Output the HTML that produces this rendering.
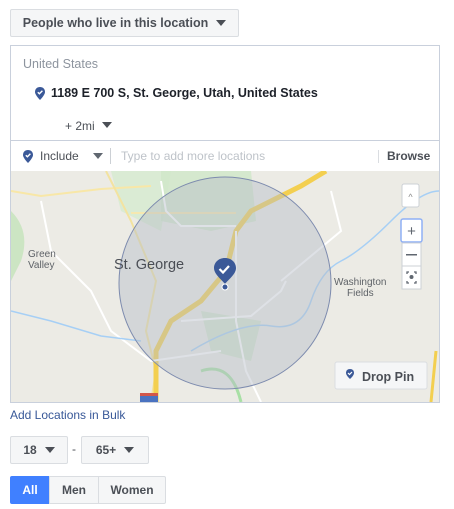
<!DOCTYPE html>
<html><head><meta charset="utf-8"><style>
*{box-sizing:border-box;margin:0;padding:0}
body{width:454px;height:509px;background:#fff;font-family:"Liberation Sans",Helvetica,Arial,sans-serif;position:relative;overflow:hidden;color:#1d2129}
.abs{position:absolute}
.btn{position:absolute;background:#f5f6f7;border:1px solid #dadde1;border-radius:2px;font-weight:bold;font-size:12px;color:#4b4f56;display:flex;align-items:center;justify-content:center}
.tri{display:inline-block;width:0;height:0;border-left:5px solid transparent;border-right:5px solid transparent;border-top:6px solid #4b4f56;margin-left:8px}
</style></head><body>
<div class="btn" style="left:10px;top:9px;width:229px;height:28px;font-size:12.5px">People who live in this location<span class="tri"></span></div>

<div class="abs" style="left:10px;top:45px;width:430px;height:358px;border:1px solid #c9d0dc;"></div>
<div class="abs" style="left:23px;top:57px;font-size:12.5px;color:#8d949e">United States</div>
<svg class="abs" style="left:35px;top:87px" width="10" height="13" viewBox="0 0 10 13"><path d="M5 0C2 0 0 2 0 5c0 3 5 8 5 8s5-5 5-8C10 2 8 0 5 0z" fill="#3b5998"/><path d="M2.8 5.2l1.6 1.6 3-3" stroke="#fff" stroke-width="1.4" fill="none"/></svg>
<div class="abs" style="left:51px;top:86px;font-size:12.5px;font-weight:bold;color:#1d2129">1189 E 700 S, St. George, Utah, United States</div>
<div class="abs" style="left:65px;top:119px;font-size:12px;color:#4b4f56">+ 2mi<span class="tri" style="margin-left:7px;vertical-align:2px"></span></div>
<div class="abs" style="left:11px;top:140px;width:428px;height:1px;background:#c9d0dc"></div>
<svg class="abs" style="left:23px;top:150px" width="10" height="13" viewBox="0 0 10 13"><path d="M5 0C2 0 0 2 0 5c0 3 5 8 5 8s5-5 5-8C10 2 8 0 5 0z" fill="#3b5998"/><path d="M2.8 5.2l1.6 1.6 3-3" stroke="#fff" stroke-width="1.4" fill="none"/></svg>
<div class="abs" style="left:40px;top:149px;font-size:12px;color:#4b4f56">Include</div>
<span class="abs tri" style="left:85px;top:153px;border-top-color:#606770"></span>
<div class="abs" style="left:110px;top:148px;width:1px;height:16px;background:#ccd0d5"></div>
<div class="abs" style="left:121px;top:149px;font-size:12px;color:#bec3c9">Type to add more locations</div>
<div class="abs" style="left:378px;top:150px;width:1px;height:13px;background:#dadde1"></div>
<div class="abs" style="left:387px;top:149px;font-size:12px;font-weight:bold;color:#4b4f56">Browse</div>

<svg class="abs" style="left:11px;top:171px" width="428" height="231" viewBox="0 0 428 231">
<rect width="428" height="231" fill="#ecebe5"/>
<path d="M100 0 L160 0 L150 60 L110 40 Z" fill="#d6ebcf" opacity=".8"/>
<path d="M150 0 L240 0 L245 50 L200 60 L150 50Z" fill="#cfe7c8" opacity=".8"/>
<path d="M0 40 Q20 60 10 90 L0 110Z" fill="#bfe3b5" opacity=".7"/>
<path d="M190 140 L250 150 L240 190 L200 180Z" fill="#c6e3c0" opacity=".6"/>
<path d="M0 20 L30 25 L90 18 L140 15" stroke="#f8e7a7" stroke-width="2" fill="none"/>
<path d="M95 0 L120 50 L145 110 L135 160 L145 200 L140 231" stroke="#f3e3a0" stroke-width="2" fill="none"/>
<path d="M315 0 L290 15 L240 40 L225 60 L215 100 L190 130 L160 150 L145 180 L145 231" stroke="#f3cf50" stroke-width="5" fill="none"/>
<path d="M120 42 L225 42" stroke="#f6e8b0" stroke-width="2" fill="none"/>
<path d="M225 60 L225 150 L235 200 L250 231" stroke="#fff" stroke-width="2" fill="none"/>
<path d="M150 10 L155 40 L170 55 L225 55" stroke="#fff" stroke-width="2" fill="none"/>
<path d="M30 30 L40 80 L80 120 L100 160 L140 190 L210 180" stroke="#fff" stroke-width="2" fill="none"/>
<path d="M270 110 L330 60 L320 20" stroke="#fff" stroke-width="2" fill="none"/>
<path d="M170 150 L240 145 L270 120 L275 110" stroke="#fff" stroke-width="2" fill="none"/>
<path d="M180 180 Q230 150 260 155 T300 130 T330 90 T380 50 T428 20" stroke="#a6cff5" stroke-width="1.5" fill="none"/>
<path d="M0 140 L40 150 L90 165 L130 170" stroke="#a6cff5" stroke-width="1.5" fill="none"/>
<path d="M190 200 Q220 190 230 231" stroke="#a8e0a5" stroke-width="3" fill="none"/>
<path d="M265 231 Q280 200 275 190" stroke="#f3cf50" stroke-width="0" fill="none"/>
<path d="M425 180 L420 231" stroke="#f3cf50" stroke-width="3" fill="none"/>
<circle cx="214" cy="112" r="106" fill="#b6bcc8" fill-opacity=".45" stroke="#7d8bae" stroke-width="1"/>
<rect x="129" y="222" width="18" height="9" fill="#4a72c0"/><rect x="129" y="222" width="18" height="3" fill="#d2564a"/>
<text x="17" y="86" font-size="10" fill="#5f6368" font-family="Liberation Sans,sans-serif">Green</text>
<text x="17" y="97" font-size="10" fill="#5f6368" font-family="Liberation Sans,sans-serif">Valley</text>
<text x="103" y="98" font-size="14.5" fill="#4a4e55" font-family="Liberation Sans,sans-serif">St. George</text>
<text x="323" y="114" font-size="10" fill="#5f6368" font-family="Liberation Sans,sans-serif">Washington</text>
<text x="336" y="125" font-size="10" fill="#5f6368" font-family="Liberation Sans,sans-serif">Fields</text>
<path d="M214 87 C207 87 203 92 203 97 C203 103 210 108 214 113 C218 108 225 103 225 97 C225 92 221 87 214 87Z" fill="#3b5998"/>
<path d="M208.5 98l3.5 3.5 6-6.5" stroke="#fff" stroke-width="2.2" fill="none"/>
<circle cx="214" cy="116" r="3" fill="#3b5998" stroke="#fff" stroke-width="1"/>
<rect x="391" y="13" width="17" height="23" rx="2" fill="#fff" stroke="#ccd0d5"/>
<text x="399.5" y="29" font-size="9" fill="#888" text-anchor="middle">^</text>
<rect x="390" y="48" width="21" height="23" rx="2" fill="#fff" stroke="#8fb0f5" stroke-width="1.5"/>
<text x="400.5" y="65" font-size="15" fill="#606770" text-anchor="middle">+</text>
<rect x="391" y="72" width="19" height="23" fill="#fff" stroke="#ccd0d5"/>
<rect x="395" y="83" width="11" height="1.5" fill="#606770"/>
<rect x="391" y="95" width="19" height="23" fill="#fff" stroke="#ccd0d5"/>
<path d="M396 103v-2h2 M403 101h2v2 M405 110v2h-2 M398 112h-2v-2" stroke="#606770" stroke-width="1.3" fill="none"/><circle cx="400.5" cy="106" r="2" fill="#606770"/>
<rect x="324" y="191" width="92" height="27" rx="2" fill="#f5f6f7" stroke="#dadde1"/>
<path d="M339 198C336.5 198 335 199.5 335 202c0 2.5 4 6 4 6s4-3.5 4-6c0-2.5-1.5-4-4-4z" fill="#3b5998"/>
<path d="M337 202l1.5 1.5 2.5-2.5" stroke="#fff" stroke-width="1.2" fill="none"/>
<text x="351" y="210" font-size="12.5" font-weight="bold" fill="#4b4f56" font-family="Liberation Sans,sans-serif">Drop Pin</text>
</svg>

<div class="abs" style="left:10px;top:408px;font-size:12px;color:#385898">Add Locations in Bulk</div>
<div class="btn" style="left:10px;top:436px;width:58px;height:28px">18<span class="tri"></span></div>
<div class="abs" style="left:72px;top:442px;font-size:12px;color:#4b4f56">-</div>
<div class="btn" style="left:81px;top:436px;width:68px;height:28px">65+<span class="tri"></span></div>
<div class="btn" style="left:10px;top:476px;width:40px;height:28px;background:#4080ff;border-color:#4080ff;color:#fff;border-radius:2px 0 0 2px">All</div>
<div class="btn" style="left:49px;top:476px;width:50px;height:28px;border-radius:0">Men</div>
<div class="btn" style="left:98px;top:476px;width:68px;height:28px;border-radius:0 2px 2px 0">Women</div>
</body></html>
